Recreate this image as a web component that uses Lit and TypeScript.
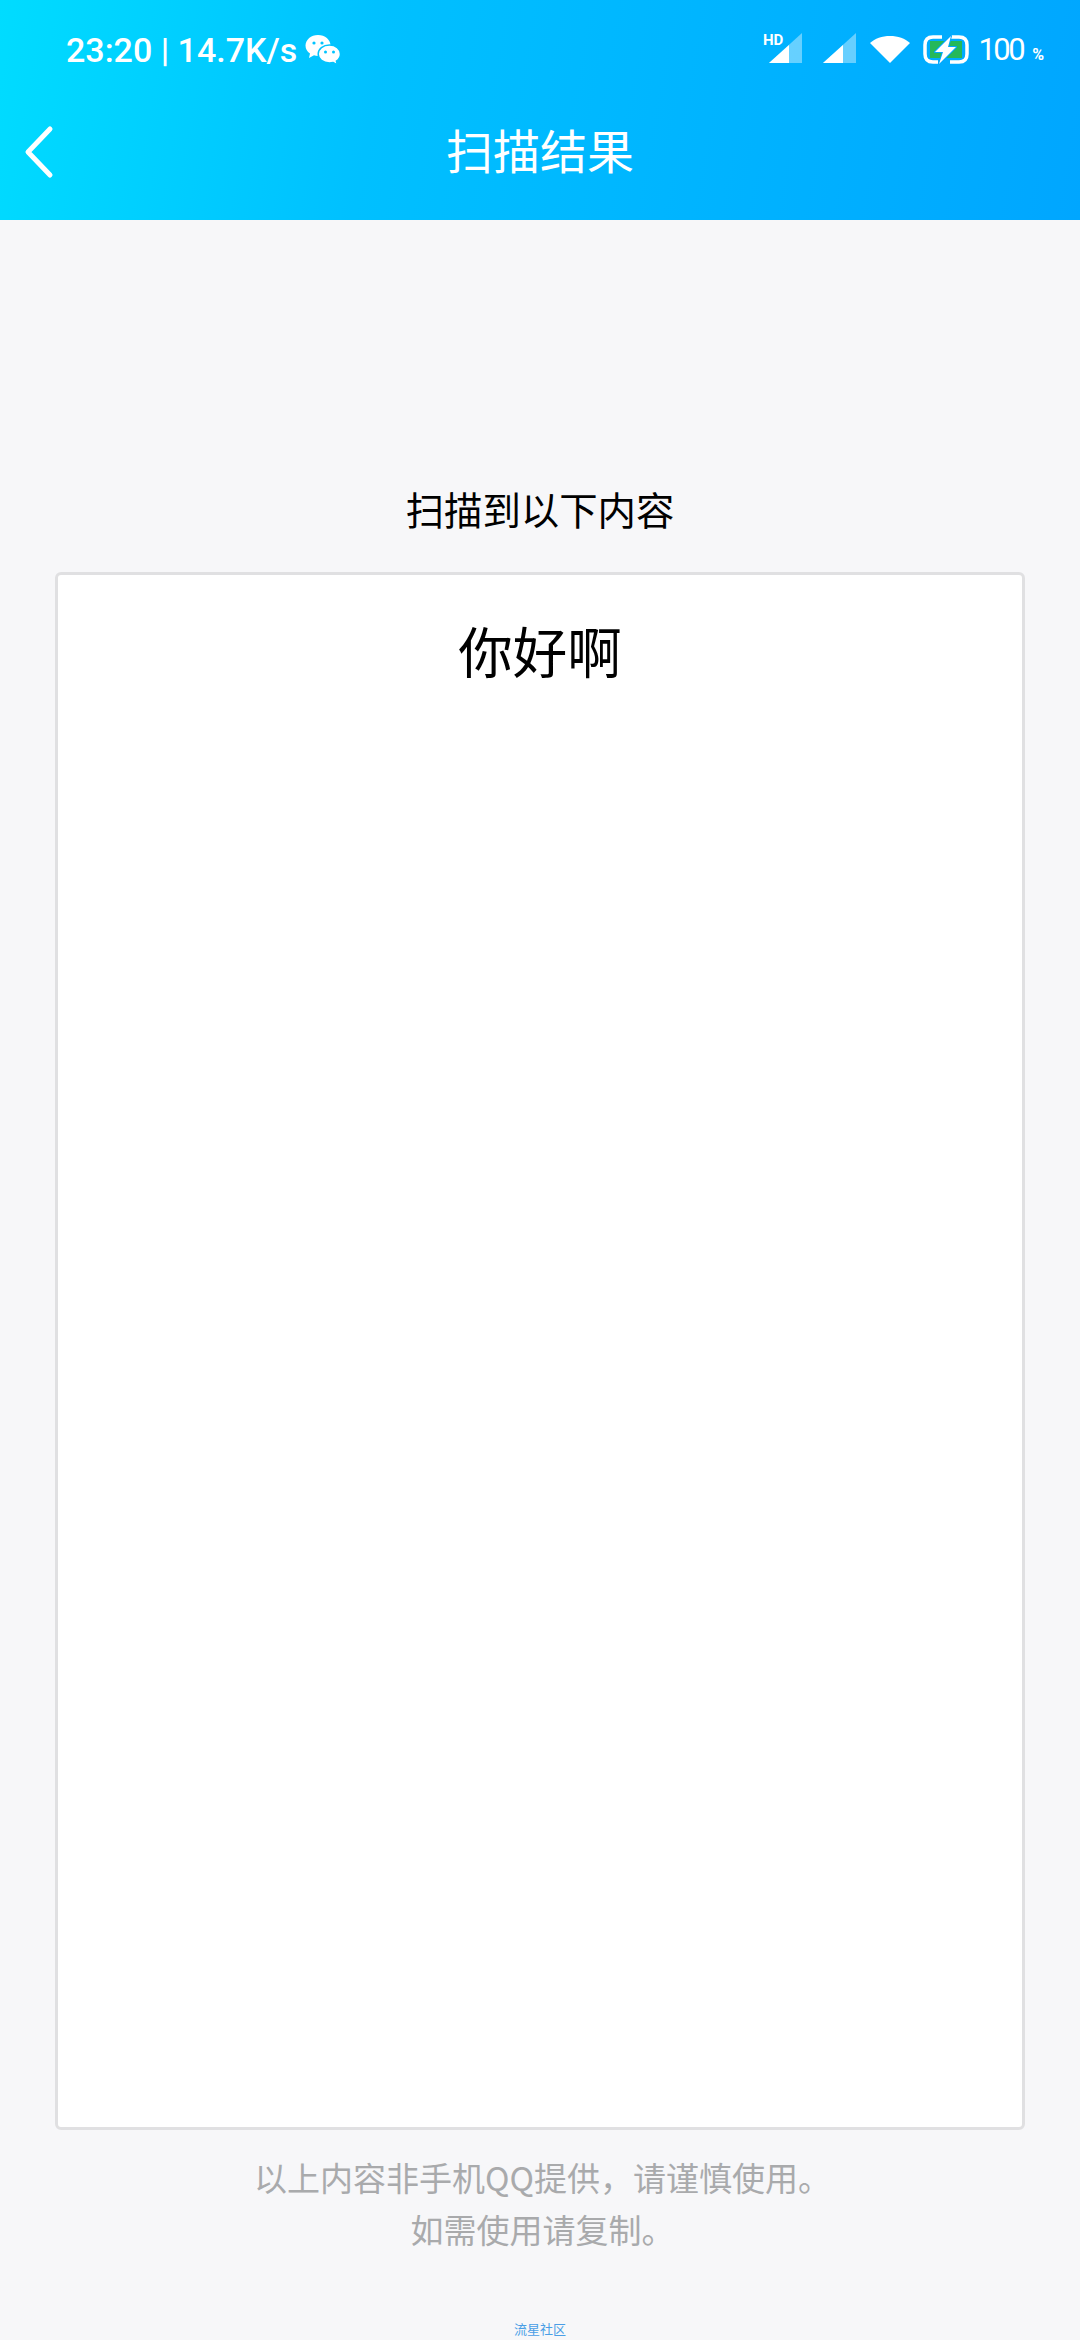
import { LitElement, html, css, svg } from "lit";
import { customElement } from "lit/decorators.js";

@customElement("app-root")
export class AppRoot extends LitElement {
  static styles = css`
    :host { display: block; width: 1080px; height: 2340px; overflow: hidden; background: #f7f7f9; font-family: "Noto Sans CJK SC", "Noto Sans", sans-serif; }
    .page { display: flex; flex-direction: column; height: 2340px; }
    .header { height: 220px; flex: none; background: linear-gradient(100deg, #00dcff 0%, #00c0ff 35%, #00a6ff 100%); color: #fff; display: flex; flex-direction: column; }
    .status { height: 100px; flex: none; display: flex; justify-content: space-between; align-items: center; padding: 0 36px 0 66px; }
    .status-left { display: flex; align-items: center; gap: 8px; font: 500 34px/40px Roboto, sans-serif; }
    .status-right { display: flex; align-items: center; }
    .batt-text { font: 400 31px/40px Roboto, sans-serif; letter-spacing: -2.5px; margin-left: 9px; }
    .pct { font: 700 16px/16px Roboto, sans-serif; margin-left: 9px; align-self: flex-end; margin-bottom: 10px; }
    .nav { flex: 1; display: flex; align-items: center; position: relative; justify-content: center; padding-bottom: 22px; }
    .back { position: absolute; left: 24px; top: 24px; }
    .title { font-size: 47px; line-height: 64px; }
    .main { flex: 1; display: flex; flex-direction: column; align-items: center; min-height: 0; }
    .lead { margin-top: 260px; font-size: 38.4px; line-height: 56px; color: #000; }
    .card { box-sizing: border-box; width: 970px; height: 1558px; margin-top: 36px; background: #fff; border: 3px solid #e0e0e2; border-radius: 6px; text-align: center; padding-top: 37px; font-size: 54.5px; line-height: 76px; color: #000; flex: none; }
    .note { margin-top: 21px; padding-left: 5px; font-size: 33px; line-height: 52px; color: #a9aaac; text-align: center; }
    .brand { margin-top: 65px; font-size: 13px; line-height: 18px; color: #4a9ee6; }
  `;

  private signal(hd: boolean) {
    return svg`<svg width="${hd ? 40 : 33}" height="46" viewBox="${hd ? "-7 -6 40 46" : "0 -6 33 46"}" style="${hd ? "" : "margin-left:21px"}">
      <path d="M0 30H33V0Z" fill="#fff" fill-opacity=".4"/>
      <path d="M0 30H20V12Z" fill="#fff"/>
      ${hd ? svg`<text x="-6" y="12" font-family="Roboto, sans-serif" font-weight="700" font-size="15" fill="#fff">HD</text>` : ""}
    </svg>`;
  }

  render() {
    return html`
      <div class="page">
        <header class="header">
          <div class="status">
            <div class="status-left">
              <span>23:20 | 14.7K/s</span>
              <svg width="36" height="30" viewBox="0 0 36 30" fill="#fff">
                <path d="M13 0C6 0 .5 4.700.5 10.500c0 3.300 1.700 6.200 4.500 8L4 23l5-2.700c1.300.4 2.600.6 4 .6 7 0 12.500-4.600 12.500-10.400S20 0 13 0Z"/>
                <path d="M24.500 10C18 10 13.200 14 13.200 19s4.800 9 11.300 9c1.300 0 2.500-.2 3.700-.5l4.300 2.500-1.100-3.900c2.600-1.700 4.100-4.200 4.100-7.100 0-5-4.800-9-11-9Z" stroke="#00c4ff" stroke-width="1.500"/>
                <circle cx="9" cy="8" r="1.600" fill="#00c4ff"/><circle cx="17" cy="8" r="1.600" fill="#00c4ff"/>
                <circle cx="20.500" cy="17" r="1.500" fill="#00c4ff"/><circle cx="28.500" cy="17" r="1.500" fill="#00c4ff"/>
              </svg>
            </div>
            <div class="status-right">
              ${this.signal(true)}
              ${this.signal(false)}
              <svg width="40" height="28" viewBox="0 0 40 28" style="margin-left:14px" fill="#fff">
                <path d="M0 7C5 2.500 12 0 20 0s15 2.500 20 7L20 27Z"/>
              </svg>
              <svg width="46" height="30" viewBox="0 0 46 30" style="margin-left:13px">
                <path d="M7 6H39V23H7Z" fill="#25b85a"/>
                <path d="M19 2H10Q2 2 2 10V19Q2 27 10 27H15M28 2H36Q44 2 44 10V19Q44 27 36 27H27" fill="none" stroke="#fff" stroke-width="3.500"/>
                <path d="M28 1 12 17H20L16 29 33 12H25Z" fill="#fff" stroke="#00a8ff" stroke-width="2" stroke-linejoin="round" paint-order="stroke"/>
              </svg>
              <span class="batt-text">100</span>
              <span class="pct">%</span>
            </div>
          </div>
          <div class="nav">
            <svg class="back" width="32" height="56" viewBox="0 0 32 56" fill="none" stroke="#fff" stroke-width="5" stroke-linecap="round" stroke-linejoin="round">
              <path d="M26 5 4 28 26 51"/>
            </svg>
            <div class="title">扫描结果</div>
          </div>
        </header>
        <main class="main">
          <div class="lead">扫描到以下内容</div>
          <div class="card">你好啊</div>
          <div class="note">以上内容非手机QQ提供，请谨慎使用。<br />如需使用请复制。</div>
          <div class="brand">流星社区</div>
        </main>
      </div>
    `;
  }
}
